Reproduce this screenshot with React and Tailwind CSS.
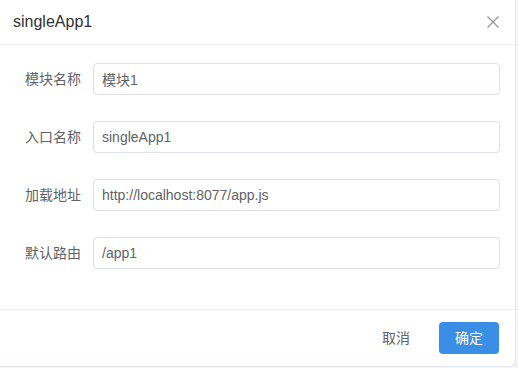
const fields = [
  { label: "模块名称", value: "模块1" },
  { label: "入口名称", value: "singleApp1" },
  { label: "加载地址", value: "http://localhost:8077/app.js" },
  { label: "默认路由", value: "/app1" },
];

const App = () => {
  return (
    <div
      className="w-[518px] h-[368px] bg-[#f4f4f5] overflow-hidden"
      style={{ fontFamily: '"Liberation Sans", "Noto Sans CJK SC", sans-serif' }}
    >
      <div className="w-[516px] h-[367px] bg-white border-r border-b border-[#e4e7ed] rounded-br-[6px] flex flex-col">
        {/* Header */}
        <div className="h-[45px] flex items-center justify-between pl-[13px] pr-[15px] border-b border-[#ebeef5]">
          <span className="text-[16px] text-[#303133]">singleApp1</span>
          <svg width="14" height="14" viewBox="0 0 14 14" className="text-[#909399]">
            <path d="M1.5 1.5 L12.5 12.5 M12.5 1.5 L1.5 12.5" stroke="currentColor" strokeWidth="1.2" fill="none" />
          </svg>
        </div>

        {/* Form */}
        <div className="flex-1 pt-[18px] flex flex-col gap-[26px]">
          {fields.map((f) => (
            <div key={f.label} className="flex items-center">
              <label className="w-[81px] text-right text-[14px] text-[#606266]">
                {f.label}
              </label>
              <input
                readOnly
                value={f.value}
                className="ml-[12px] w-[407px] h-[32px] px-[8px] text-[14px] text-[#606266] border border-[#dcdfe6] rounded-[4px] outline-none"
              />
            </div>
          ))}
        </div>

        {/* Footer */}
        <div className="h-[57px] border-t border-[#ebeef5] flex items-start justify-end pt-[12px] pr-[16px]">
          <button className="h-[32px] px-[16px] text-[14px] text-[#606266] mr-[13px]">取消</button>
          <button className="h-[32px] w-[60px] rounded-[4px] bg-[#3a8ee6] text-white text-[14px]">
            确定
          </button>
        </div>
      </div>
    </div>
  );
};

export default App;
